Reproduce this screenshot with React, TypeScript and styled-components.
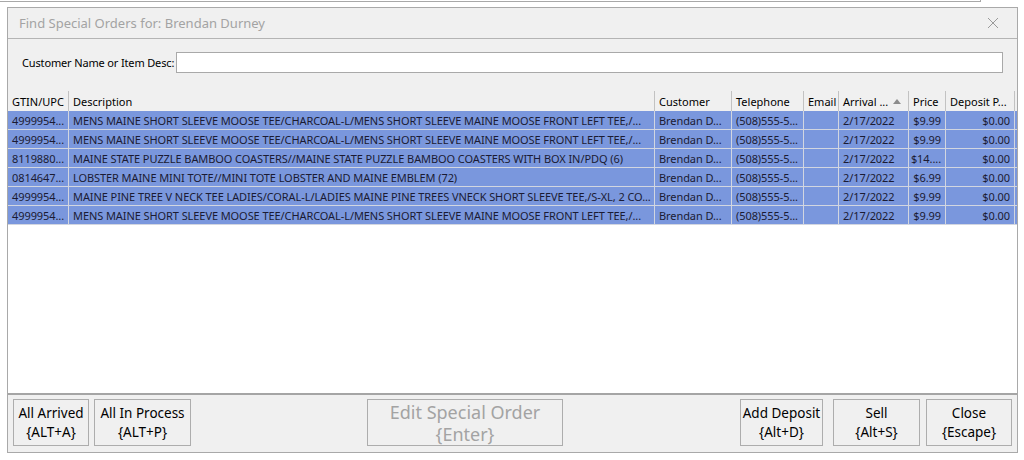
import React from 'react';
import styled, { createGlobalStyle } from 'styled-components';

const GlobalStyle = createGlobalStyle`
  html, body {
    margin: 0;
    padding: 0;
    background: #ffffff;
  }
  body {
    font-family: 'Noto Sans', 'Open Sans', sans-serif;
    width: 1024px;
    height: 460px;
    overflow: hidden;
  }
`;

const Screen = styled.div`
  width: 1024px;
  height: 460px;
  box-sizing: border-box;
`;

const ParentEdge = styled.div`
  width: 980px;
  height: 1px;
  border-bottom: 1px solid #a8a8a8;
  border-right: 1px solid #a8a8a8;
`;

const Dialog = styled.div`
  margin: 5px 0 0 7px;
  width: 1011px;
  height: 446px;
  box-sizing: border-box;
  border: 1px solid #a9a9a9;
  background: #f0f0f0;
  display: flex;
  flex-direction: column;
`;

const TitleBar = styled.div`
  height: 30px;
  border-bottom: 1px solid #b4b4b4;
  display: flex;
  align-items: center;
  justify-content: space-between;
  padding: 0 18px 0 11px;
`;

const Title = styled.div`
  font-size: 13px;
  color: #a3a3a3;
`;

const CloseGlyph = styled.svg`
  width: 12px;
  height: 12px;
  display: block;
`;

const SearchRow = styled.div`
  height: 52px;
  box-sizing: border-box;
  display: flex;
  align-items: center;
  padding: 0 14px 5px 14px;
  gap: 2px;
`;

const Label = styled.label`
  font-size: 11px;
  letter-spacing: -0.15px;
  color: #000;
  white-space: nowrap;
`;

const SearchInput = styled.input`
  flex: 1;
  height: 21px;
  box-sizing: border-box;
  border: 1px solid #a9a9a9;
  background: #fff;
  outline: none;
  padding: 0 4px;
  font: inherit;
`;

const Grid = styled.div`
  height: 304px;
  box-sizing: border-box;
  background: #ffffff;
  border-bottom: 2px solid #a5a5a5;
  overflow: hidden;
`;

const columns = '61px 586px 77px 72px 35px 70px 37px 69px';

const HeaderRow = styled.div`
  display: grid;
  grid-template-columns: ${columns};
  height: 20px;
  background: #f0f0f0;
`;

const HeaderCell = styled.div`
  display: flex;
  align-items: center;
  justify-content: space-between;
  padding: 0 4px 0 4px;
  border-right: 1px solid #c2c2c2;
  font-size: 11px;
  color: #000;
  white-space: nowrap;
  overflow: hidden;
`;

const SortArrow = styled.span`
  width: 0;
  height: 0;
  border-left: 4px solid transparent;
  border-right: 4px solid transparent;
  border-bottom: 5px solid #8c8c8c;
  margin-right: 3px;
`;

const DataRow = styled.div`
  display: grid;
  grid-template-columns: ${columns};
  height: 19px;
  box-sizing: border-box;
  background: #7a97dd;
  border-bottom: 1px solid #d2d6e0;
`;

const Cell = styled.div<{ $right?: boolean }>`
  display: flex;
  align-items: center;
  justify-content: ${(p) => (p.$right ? 'flex-end' : 'flex-start')};
  padding: 0 4px;
  border-right: 1px solid #d2d6e0;
  font-size: 11px;
  letter-spacing: -0.08px;
  color: #1b1b33;
  white-space: nowrap;
  overflow: hidden;
`;

const Footer = styled.div`
  flex: 1;
  display: flex;
  align-items: flex-start;
  padding: 4px 5px 0 5px;
`;

const ButtonGroup = styled.div`
  display: flex;
  gap: 5px;
`;

const ActionButton = styled.button<{ $width: number; $big?: boolean }>`
  width: ${(p) => p.$width}px;
  height: 47px;
  box-sizing: border-box;
  border: 1px solid #adadad;
  background: #f0f0f0;
  padding: 0;
  font-family: 'Noto Sans', 'Open Sans', sans-serif;
  font-size: ${(p) => (p.$big ? '18px' : '13.5px')};
  line-height: ${(p) => (p.$big ? '22px' : '19px')};
  color: ${(p) => (p.$big ? '#a3a3a3' : '#000')};
  text-align: center;
  white-space: nowrap;
`;

const EditSlot = styled.div`
  margin-left: 176px;
`;

const RightGroup = styled.div`
  margin-left: auto;
  display: flex;
`;

type Order = {
  gtin: string;
  desc: string;
  customer: string;
  phone: string;
  email: string;
  arrival: string;
  price: string;
  deposit: string;
};

const moose = 'MENS MAINE SHORT SLEEVE MOOSE TEE/CHARCOAL-L/MENS SHORT SLEEVE MAINE MOOSE FRONT LEFT TEE,/...';

const orders: Order[] = [
  { gtin: '4999954...', desc: moose, customer: 'Brendan D...', phone: '(508)555-5...', email: '', arrival: '2/17/2022', price: '$9.99', deposit: '$0.00' },
  { gtin: '4999954...', desc: moose, customer: 'Brendan D...', phone: '(508)555-5...', email: '', arrival: '2/17/2022', price: '$9.99', deposit: '$0.00' },
  { gtin: '8119880...', desc: 'MAINE STATE PUZZLE BAMBOO COASTERS//MAINE STATE PUZZLE BAMBOO COASTERS WITH BOX IN/PDQ (6)', customer: 'Brendan D...', phone: '(508)555-5...', email: '', arrival: '2/17/2022', price: '$14....', deposit: '$0.00' },
  { gtin: '0814647...', desc: 'LOBSTER MAINE MINI TOTE//MINI TOTE LOBSTER AND MAINE EMBLEM (72)', customer: 'Brendan D...', phone: '(508)555-5...', email: '', arrival: '2/17/2022', price: '$6.99', deposit: '$0.00' },
  { gtin: '4999954...', desc: 'MAINE PINE TREE V NECK TEE LADIES/CORAL-L/LADIES MAINE PINE TREES VNECK SHORT SLEEVE TEE,/S-XL, 2 CO...', customer: 'Brendan D...', phone: '(508)555-5...', email: '', arrival: '2/17/2022', price: '$9.99', deposit: '$0.00' },
  { gtin: '4999954...', desc: moose, customer: 'Brendan D...', phone: '(508)555-5...', email: '', arrival: '2/17/2022', price: '$9.99', deposit: '$0.00' },
];

const App = () => {
  return (
    <Screen>
      <GlobalStyle />
      <ParentEdge />
      <Dialog>
        <TitleBar>
          <Title>Find Special Orders for: Brendan Durney</Title>
          <CloseGlyph viewBox="0 0 12 12">
            <path d="M1 1 L11 11 M11 1 L1 11" stroke="#9a9a9a" strokeWidth="1" fill="none" />
          </CloseGlyph>
        </TitleBar>

        <SearchRow>
          <Label htmlFor="search">Customer Name or Item Desc:</Label>
          <SearchInput id="search" />
        </SearchRow>

        <Grid>
          <HeaderRow>
            <HeaderCell>GTIN/UPC</HeaderCell>
            <HeaderCell>Description</HeaderCell>
            <HeaderCell>Customer</HeaderCell>
            <HeaderCell>Telephone</HeaderCell>
            <HeaderCell>Email</HeaderCell>
            <HeaderCell>
              Arrival ...
              <SortArrow />
            </HeaderCell>
            <HeaderCell>Price</HeaderCell>
            <HeaderCell>Deposit P...</HeaderCell>
          </HeaderRow>
          {orders.map((o, i) => (
            <DataRow key={i}>
              <Cell>{o.gtin}</Cell>
              <Cell>{o.desc}</Cell>
              <Cell>{o.customer}</Cell>
              <Cell>{o.phone}</Cell>
              <Cell>{o.email}</Cell>
              <Cell>{o.arrival}</Cell>
              <Cell $right>{o.price}</Cell>
              <Cell $right>{o.deposit}</Cell>
            </DataRow>
          ))}
        </Grid>

        <Footer>
          <ButtonGroup>
            <ActionButton $width={76}>All Arrived<br />{'{ALT+A}'}</ActionButton>
            <ActionButton $width={97}>All In Process<br />{'{ALT+P}'}</ActionButton>
          </ButtonGroup>
          <EditSlot>
            <ActionButton $width={196} $big disabled>Edit Special Order<br />{'{Enter}'}</ActionButton>
          </EditSlot>
          <RightGroup>
            <ActionButton $width={83} style={{ marginRight: 10 }}>Add Deposit<br />{'{Alt+D}'}</ActionButton>
            <ActionButton $width={87} style={{ marginRight: 6 }}>Sell<br />{'{Alt+S}'}</ActionButton>
            <ActionButton $width={86}>Close<br />{'{Escape}'}</ActionButton>
          </RightGroup>
        </Footer>
      </Dialog>
    </Screen>
  );
};

export default App;
